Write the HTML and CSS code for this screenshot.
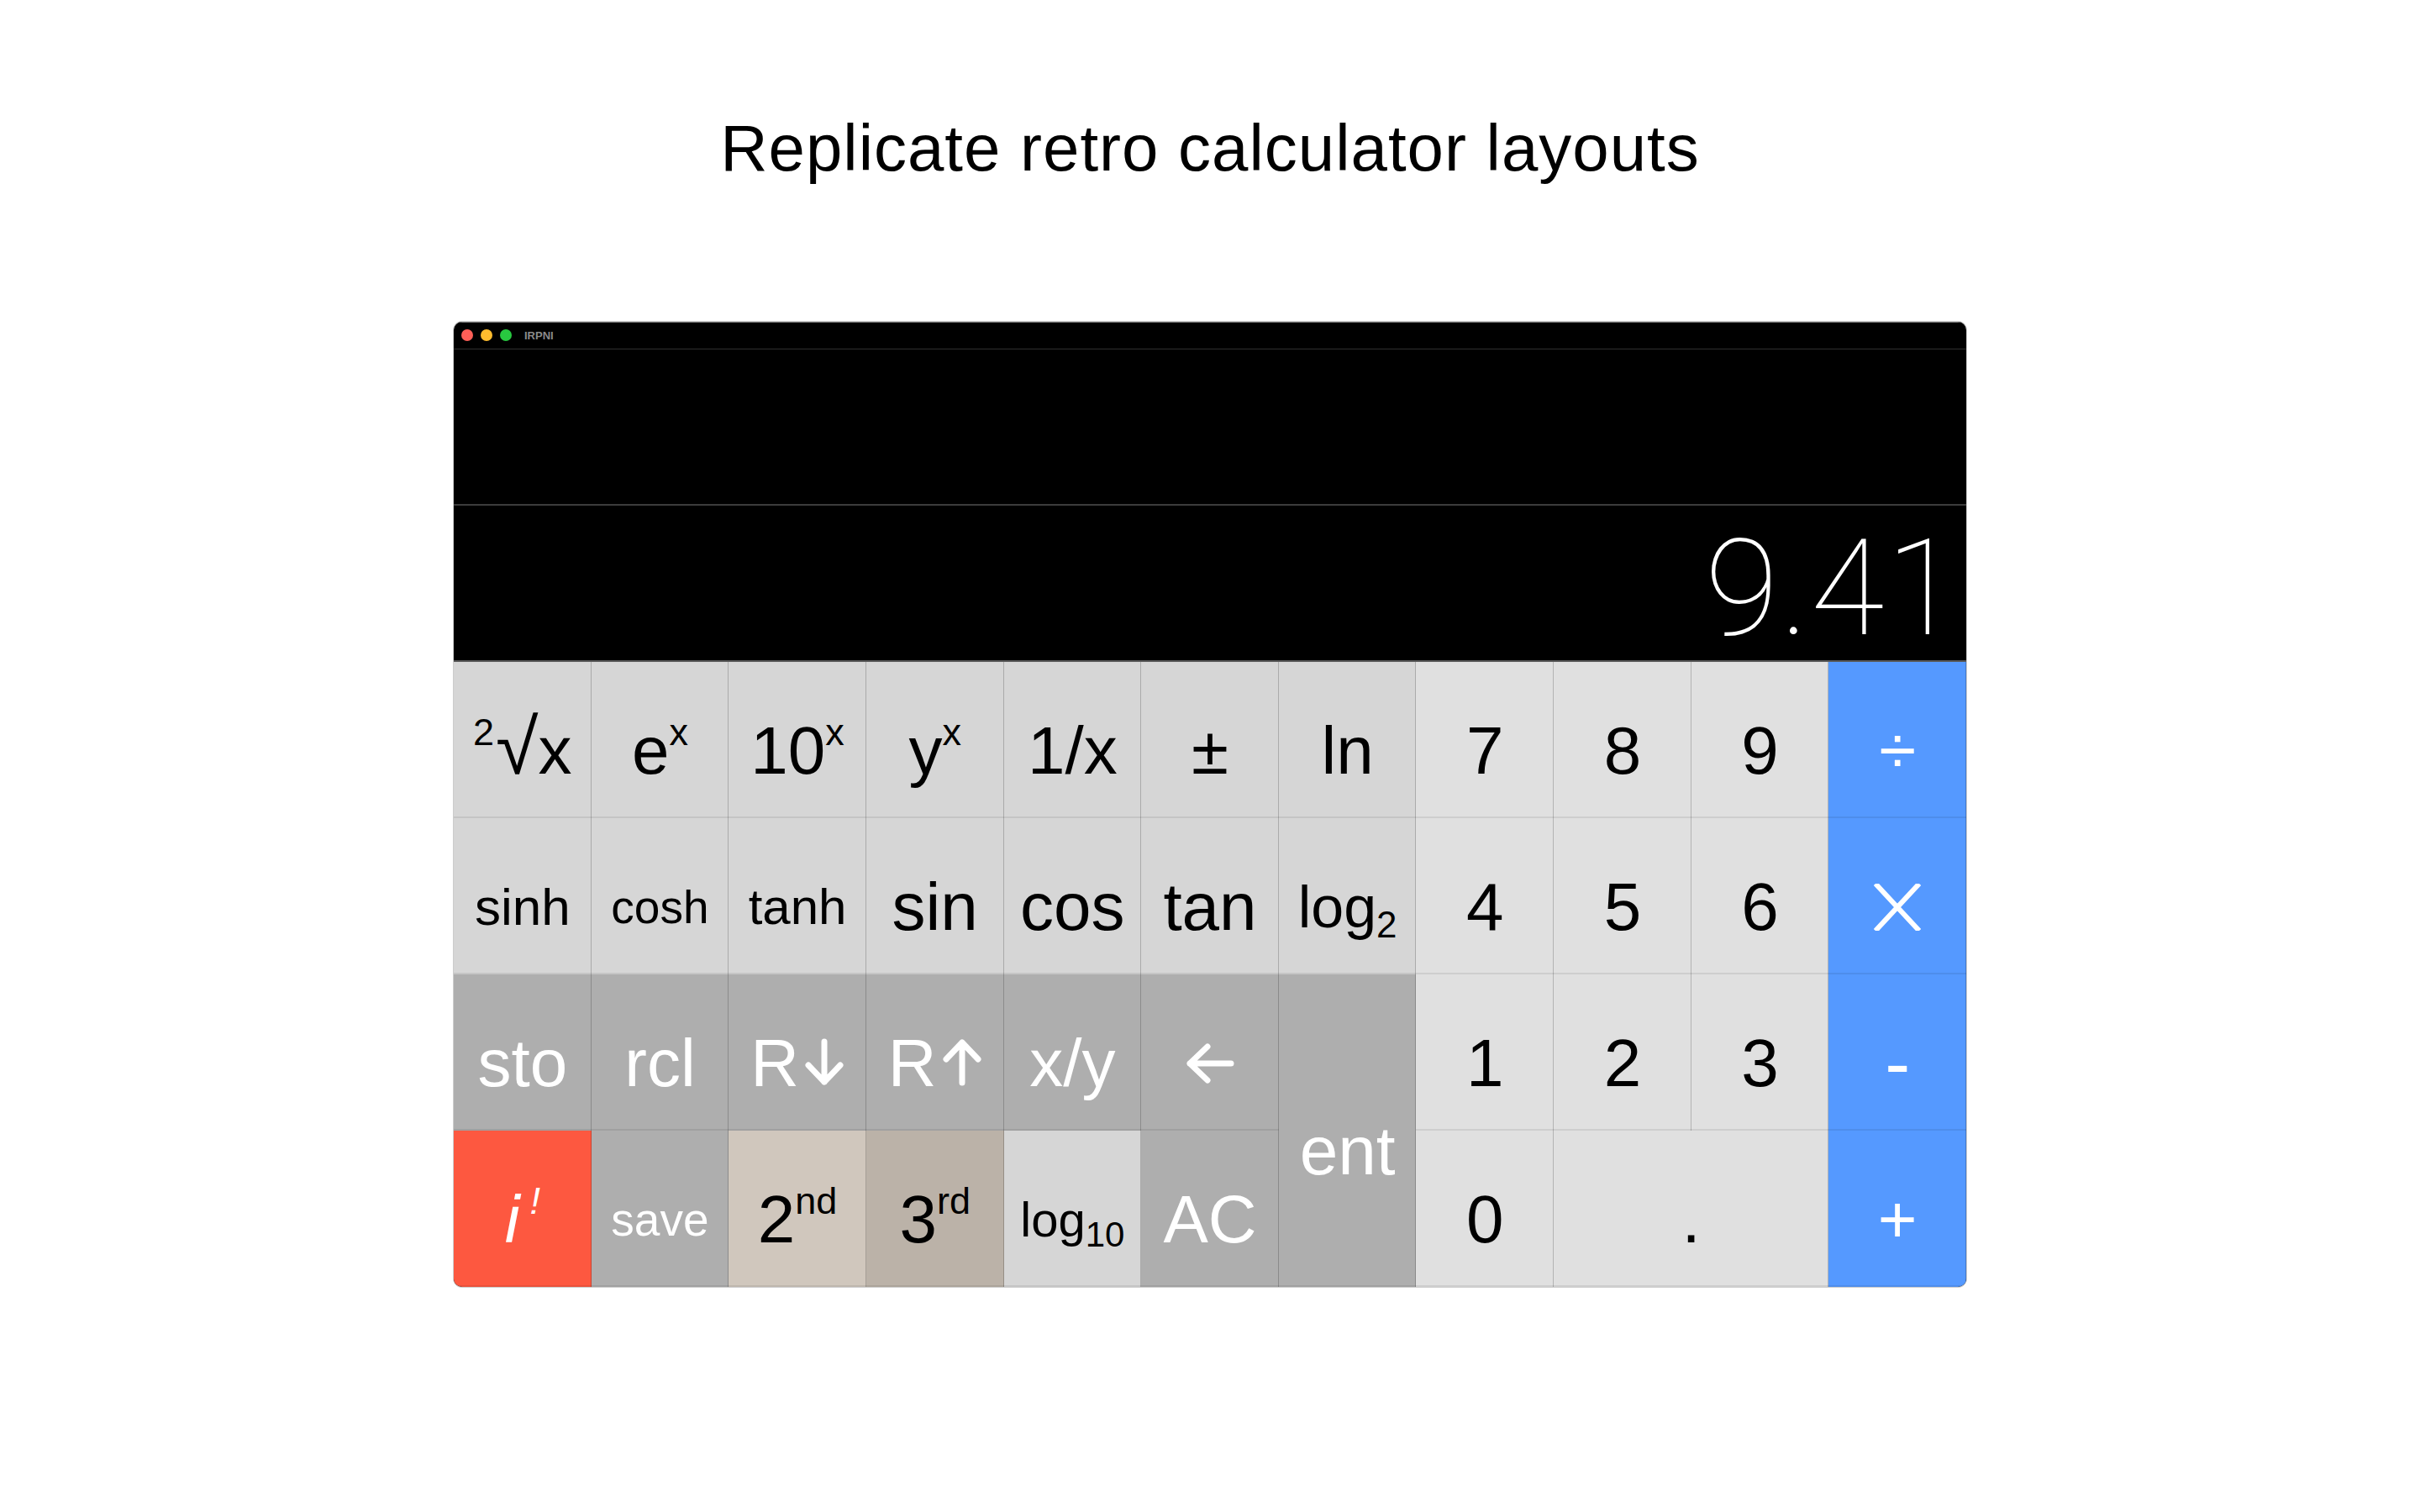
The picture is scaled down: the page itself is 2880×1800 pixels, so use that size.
FILE: index.html
```html
<!DOCTYPE html>
<html lang="en">
<head>
<meta charset="utf-8">
<title>IRPNI</title>
<link rel="stylesheet" href="styles.css">
</head>
<body>
<main class="page">
  <h1 class="headline">Replicate retro calculator layouts</h1>

  <div class="window">
    <header class="titlebar">
      <span class="light close"></span>
      <span class="light min"></span>
      <span class="light zoom"></span>
      <span class="app-name">IRPNI</span>
    </header>

    <section class="display">
      <div class="stack-row upper"></div>
      <div class="stack-row lower"><span class="readout">9.41</span></div>
    </section>

    <div class="keypad">
      <!-- row 1 -->
      <button class="key fn"><span class="label"><sup class="sup pre">2</sup><span class="radical">√</span>x</span></button>
      <button class="key fn"><span class="label">e<sup class="sup">x</sup></span></button>
      <button class="key fn"><span class="label">10<sup class="sup">x</sup></span></button>
      <button class="key fn"><span class="label">y<sup class="sup">x</sup></span></button>
      <button class="key fn"><span class="label">1/x</span></button>
      <button class="key fn"><span class="label">±</span></button>
      <button class="key fn"><span class="label">ln</span></button>
      <button class="key num"><span class="label">7</span></button>
      <button class="key num"><span class="label">8</span></button>
      <button class="key num"><span class="label">9</span></button>
      <button class="key op"><span class="label">÷</span></button>

      <!-- row 2 -->
      <button class="key fn sz-sinh"><span class="label">sinh</span></button>
      <button class="key fn sz-cosh"><span class="label">cosh</span></button>
      <button class="key fn sz-tanh"><span class="label">tanh</span></button>
      <button class="key fn"><span class="label">sin</span></button>
      <button class="key fn"><span class="label">cos</span></button>
      <button class="key fn"><span class="label">tan</span></button>
      <button class="key fn sz-log2"><span class="label">log<sub class="sub">2</sub></span></button>
      <button class="key num"><span class="label">4</span></button>
      <button class="key num"><span class="label">5</span></button>
      <button class="key num"><span class="label">6</span></button>
      <button class="key op"><span class="label"><svg class="times" width="56" height="56" viewBox="0 0 56 56"><path d="M2 0 L54 56 M54 0 L2 56" /></svg></span></button>

      <!-- row 3 -->
      <button class="key dark"><span class="label">sto</span></button>
      <button class="key dark"><span class="label">rcl</span></button>
      <button class="key dark"><span class="label">R<svg class="arrow" width="48" height="57" viewBox="0 0 48 57"><path d="M24 4 V52 M5 32 L24 52 L43 32" /></svg></span></button>
      <button class="key dark"><span class="label">R<svg class="arrow" width="48" height="57" viewBox="0 0 48 57"><path d="M24 53 V5 M5 25 L24 5 L43 25" /></svg></span></button>
      <button class="key dark"><span class="label">x/y</span></button>
      <button class="key dark"><span class="label"><svg class="back" width="58" height="48" viewBox="0 0 58 48"><path d="M54 24 H5 M26 4 L5 24 L26 44" /></svg></span></button>
      <button class="key dark enter"><span class="label">ent</span></button>
      <button class="key num"><span class="label">1</span></button>
      <button class="key num"><span class="label">2</span></button>
      <button class="key num"><span class="label">3</span></button>
      <button class="key op"><span class="label minus">-</span></button>

      <!-- row 4 -->
      <button class="key alert"><span class="label"><i>i</i><sup class="sup bang"><i>!</i></sup></span></button>
      <button class="key dark sz-save"><span class="label">save</span></button>
      <button class="key shift2"><span class="label">2<sup class="sup">nd</sup></span></button>
      <button class="key shift3"><span class="label">3<sup class="sup">rd</sup></span></button>
      <button class="key fn sz-log10"><span class="label">log<sub class="sub">10</sub></span></button>
      <button class="key dark"><span class="label">AC</span></button>
      <button class="key num"><span class="label">0</span></button>
      <button class="key num wide"><span class="label">.</span></button>
      <button class="key op"><span class="label">+</span></button>
    </div>
  </div>
</main>
</body>
</html>
```

FILE: styles.css
```css
* {
  box-sizing: border-box;
}

html,
body {
  margin: 0;
  background: #ffffff;
}

body {
  font-family: "Liberation Sans", Arial, sans-serif;
  color: #000000;
}

.page {
  display: flex;
  flex-direction: column;
  align-items: center;
  padding-top: 137px;
  min-height: 1800px;
}

.headline {
  margin: 0;
  font-size: 78px;
  font-weight: 400;
  line-height: 78px;
  letter-spacing: 1px;
}

/* window chrome */
.window {
  margin-top: 168px;
  width: 1800px;
  border-radius: 10px;
  overflow: hidden;
  background: #000000;
  box-shadow: 0 0 0 1px rgba(0, 0, 0, 0.2);
}

.titlebar {
  height: 33px;
  display: flex;
  align-items: center;
  padding-left: 9px;
  border-bottom: 1px solid #2e2e2e;
  box-shadow: inset 0 1px 0 #8e8e8e;
}

.light {
  width: 14px;
  height: 14px;
  border-radius: 50%;
  margin-right: 9px;
}

.light.close { background: #fe5f57; }
.light.min { background: #febc2e; }
.light.zoom { background: #28c840; }

.app-name {
  margin-left: 6px;
  font-size: 13px;
  font-weight: 700;
  color: #8a8a8a;
}

/* stack display */
.display {
  display: flex;
  flex-direction: column;
}

.stack-row {
  height: 186px;
  display: flex;
  align-items: flex-end;
  justify-content: flex-end;
  padding: 0 6px 5px 0;
}

.stack-row.upper {
  border-bottom: 2px solid #3c3c3c;
}

.stack-row.lower {
  border-bottom: 2px solid #585858;
}

.readout {
  font-family: "Roboto", "Lato", sans-serif;
  font-weight: 100;
  font-size: 160px;
  line-height: 1;
  color: #ffffff;
  letter-spacing: 2px;
}

/* keypad */
.keypad {
  display: grid;
  grid-template-columns: repeat(11, 1fr);
  grid-template-rows: repeat(4, 186px);
}

.key {
  border: 0;
  margin: 0;
  padding: 26px 0 0;
  display: flex;
  align-items: center;
  justify-content: center;
  font-family: inherit;
  font-size: 80px;
  color: #000000;
  background: #d6d6d6;
  box-shadow: inset -1px 0 0 rgba(0, 0, 0, 0.2), inset 0 -2px 0 rgba(0, 0, 0, 0.08);
  cursor: pointer;
}

.label {
  line-height: 1;
  white-space: nowrap;
}

.fn { background: #d6d6d6; }
.num { background: #e0e0e0; }
.dark { background: #aeaeae; color: #ffffff; }
.op { background: #5599ff; color: #ffffff; }
.alert { background: #fd5840; color: #ffffff; }
.shift2 { background: #d0c7bd; }
.shift3 { background: #bbb2a8; }

.enter {
  grid-row: span 2;
  font-size: 82px;
  padding-top: 48px;
}

.wide {
  grid-column: span 2;
}

.sup {
  font-size: 45px;
  line-height: 0;
  vertical-align: 34px;
}

.sup.pre {
  margin-right: 2px;
}

.sup.bang {
  margin-left: 12px;
}

.radical {
  font-size: 92px;
  line-height: 0;
}

.sub {
  font-size: 44px;
  line-height: 0;
  vertical-align: -12px;
}

.sz-sinh { font-size: 62px; }
.sz-cosh { font-size: 55px; }
.sz-tanh { font-size: 60px; }
.sz-log2 { font-size: 70px; }
.sz-save { font-size: 55px; }
.sz-log10 { font-size: 58px; }

.sz-log10 .sub { font-size: 42px; }

.minus {
  font-size: 90px;
}

.arrow {
  margin-left: 6px;
  vertical-align: baseline;
  fill: none;
  stroke: currentColor;
  stroke-width: 7;
  stroke-linecap: round;
  stroke-linejoin: round;
}

.back,
.times {
  display: block;
  fill: none;
  stroke: currentColor;
}

.back {
  stroke-width: 7;
  stroke-linecap: round;
  stroke-linejoin: round;
}

.times {
  stroke-width: 6;
}
```
